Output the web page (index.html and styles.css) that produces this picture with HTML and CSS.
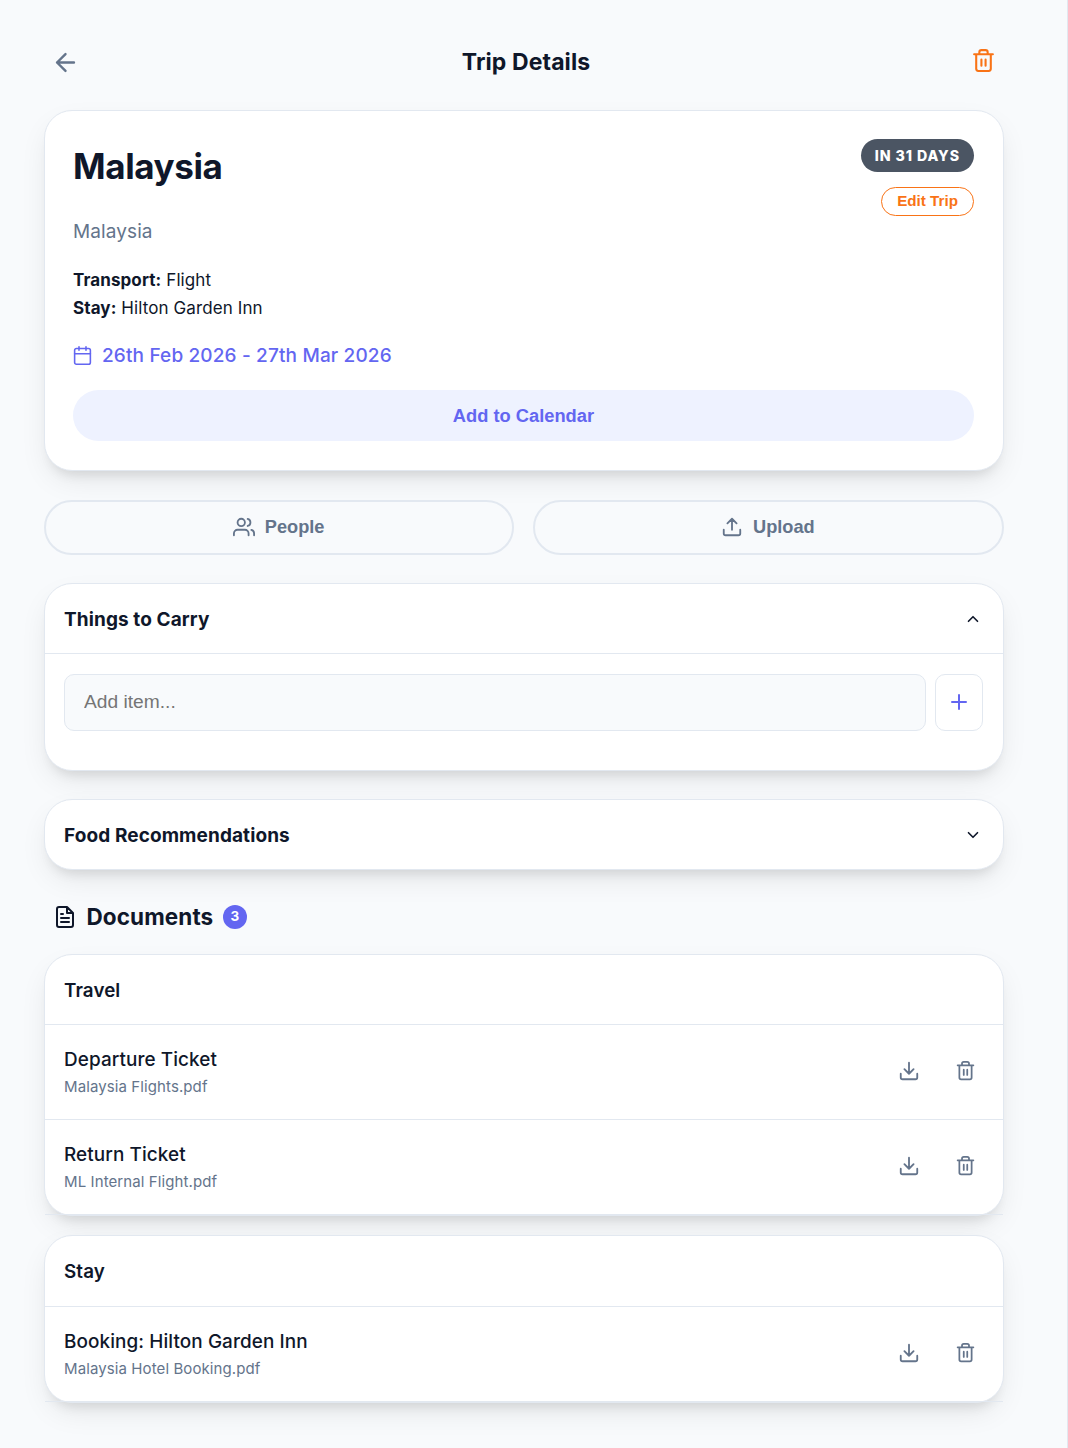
FILE: index.html
```html
<!DOCTYPE html>
<html lang="en">
<head>
    <meta charset="UTF-8">
    <title>Trip Details</title>
    <link rel="stylesheet" href="styles.css">
</head>
<body>
    <!-- shared icons -->
    <svg class="sprite">
        <symbol id="trash" viewBox="0 0 24 24">
            <path d="M3 6h18M19 6v14a2 2 0 0 1-2 2H7a2 2 0 0 1-2-2V6M8 6V4a2 2 0 0 1 2-2h4a2 2 0 0 1 2 2v2M10 11v6M14 11v6"/>
        </symbol>
        <symbol id="download" viewBox="0 0 24 24">
            <path d="M21 15v4a2 2 0 0 1-2 2H5a2 2 0 0 1-2-2v-4M7 10l5 5 5-5M12 15V3"/>
        </symbol>
    </svg>

    <div class="page">
        <header class="top">
            <svg class="icon back" viewBox="0 0 24 24"><path d="M19 12H5M12 19l-7-7 7-7"/></svg>
            <h1 class="top-title">Trip Details</h1>
            <svg class="icon delete"><use href="#trash"/></svg>
        </header>

        <section class="card trip">
            <div class="trip-head">
                <h2 class="trip-name">Malaysia</h2>
                <div class="trip-side">
                    <span class="badge">IN 31 DAYS</span>
                    <button class="edit">Edit Trip</button>
                </div>
            </div>
            <p class="place">Malaysia</p>
            <div class="info">
                <p><b>Transport:</b> Flight</p>
                <p><b>Stay:</b> Hilton Garden Inn</p>
            </div>
            <div class="dates">
                <svg class="icon cal" viewBox="0 0 24 24"><rect x="3" y="4" width="18" height="18" rx="2"/><path d="M16 2v4M8 2v4M3 10h18"/></svg>
                <span>26th Feb 2026 - 27th Mar 2026</span>
            </div>
            <button class="add-cal">Add to Calendar</button>
        </section>

        <div class="actions">
            <button class="action">
                <svg class="icon" viewBox="0 0 24 24"><path d="M17 21v-2a4 4 0 0 0-4-4H5a4 4 0 0 0-4 4v2"/><circle cx="9" cy="7" r="4"/><path d="M23 21v-2a4 4 0 0 0-3-3.87M16 3.13a4 4 0 0 1 0 7.75"/></svg>
                People
            </button>
            <button class="action">
                <svg class="icon" viewBox="0 0 24 24"><path d="M21 15v4a2 2 0 0 1-2 2H5a2 2 0 0 1-2-2v-4M17 8l-5-5-5 5M12 3v12"/></svg>
                Upload
            </button>
        </div>

        <section class="card carry">
            <div class="card-head line">
                <h3>Things to Carry</h3>
                <svg class="icon chevron" viewBox="0 0 24 24"><path d="M18 15l-6-6-6 6"/></svg>
            </div>
            <div class="add-row">
                <input class="item-input" type="text" placeholder="Add item...">
                <button class="plus"><svg class="icon" viewBox="0 0 24 24"><path d="M12 5v14M5 12h14"/></svg></button>
            </div>
        </section>

        <section class="card food">
            <div class="card-head">
                <h3>Food Recommendations</h3>
                <svg class="icon chevron" viewBox="0 0 24 24"><path d="M6 9l6 6 6-6"/></svg>
            </div>
        </section>

        <div class="docs-title">
            <svg class="icon file" viewBox="0 0 24 24"><path d="M14 2H6a2 2 0 0 0-2 2v16a2 2 0 0 0 2 2h12a2 2 0 0 0 2-2V8zM14 2v6h6M16 13H8M16 17H8M10 9H8"/></svg>
            <h2>Documents</h2>
            <span class="count">3</span>
        </div>

        <section class="card docs">
            <div class="card-head line"><h4>Travel</h4></div>
            <div class="doc">
                <div class="doc-text">
                    <p class="doc-name">Departure Ticket</p>
                    <p class="doc-file">Malaysia Flights.pdf</p>
                </div>
                <svg class="icon dl"><use href="#download"/></svg>
                <svg class="icon rm"><use href="#trash"/></svg>
            </div>
            <div class="doc">
                <div class="doc-text">
                    <p class="doc-name">Return Ticket</p>
                    <p class="doc-file">ML Internal Flight.pdf</p>
                </div>
                <svg class="icon dl"><use href="#download"/></svg>
                <svg class="icon rm"><use href="#trash"/></svg>
            </div>
        </section>

        <section class="card docs stay">
            <div class="card-head line"><h4>Stay</h4></div>
            <div class="doc">
                <div class="doc-text">
                    <p class="doc-name">Booking: Hilton Garden Inn</p>
                    <p class="doc-file">Malaysia Hotel Booking.pdf</p>
                </div>
                <svg class="icon dl"><use href="#download"/></svg>
                <svg class="icon rm"><use href="#trash"/></svg>
            </div>
        </section>
    </div>
</body>
</html>
```

FILE: styles.css
```css
* {
    box-sizing: border-box;
    margin: 0;
    padding: 0;
}

body {
    background: #f8fafc;
    color: #0f172a;
    font-family: Inter, "Liberation Sans", sans-serif;
    letter-spacing: 0.1px;
}

button, input {
    font-family: "Liberation Sans", Arial, sans-serif;
}

.sprite {
    display: none;
}

.icon {
    width: 22px;
    height: 22px;
    flex: none;
    fill: none;
    stroke: currentColor;
    stroke-width: 2;
    stroke-linecap: round;
    stroke-linejoin: round;
}

.page {
    height: 1448px;
    overflow: hidden;
    padding: 38px 63.5px 0 44px;
    border-right: 1px solid #e2e8f0;
}

/* header */
.top {
    display: flex;
    align-items: center;
    justify-content: space-between;
    height: 48px;
    padding: 0 7px 0 6.5px;
    margin-bottom: 24px;
}

.back {
    width: 29px;
    height: 29px;
    color: #64748b;
}

.top-title {
    font-size: 23px;
    font-weight: 700;
    padding-left: 1px;
}

.delete {
    width: 25px;
    height: 25px;
    color: #f97316;
    margin-bottom: 3px;
}

/* cards */
.card {
    background: #fff;
    border: 1px solid #e2e8f0;
    border-radius: 28px;
    box-shadow: 0 12px 30px -6px rgba(0, 0, 0, 0.1), 0 10px 12px -7px rgba(0, 0, 0, 0.1);
}

.trip {
    height: 361px;
    padding: 28px 28.6px 28px 28px;
}

.trip-head {
    display: flex;
    justify-content: space-between;
    height: 77px;
}

.trip-name {
    font-size: 35px;
    font-weight: 700;
    line-height: 55px;
    letter-spacing: -0.4px;
}

.trip-side {
    display: flex;
    flex-direction: column;
    align-items: flex-end;
    gap: 15px;
}

.badge {
    height: 33px;
    padding: 0 14px;
    border-radius: 17px;
    background: #4b5563;
    color: #fff;
    font-size: 14.2px;
    font-weight: 800;
    line-height: 33px;
    letter-spacing: 0.9px;
}

.edit {
    height: 29px;
    padding: 0 15px 2px;
    border: 1px solid #f97316;
    border-radius: 15px;
    background: none;
    color: #f97316;
    font-size: 15.2px;
    font-weight: 700;
}

.place {
    margin-top: 2px;
    color: #64748b;
    font-size: 19px;
    line-height: 28px;
}

.info {
    margin-top: 20px;
    font-size: 17px;
    line-height: 28px;
}

.dates {
    display: flex;
    align-items: center;
    gap: 10px;
    height: 28px;
    margin-top: 19px;
    color: #6366f1;
    font-size: 19px;
    font-weight: 500;
    letter-spacing: 0.15px;
}

.cal {
    width: 21px;
    height: 21px;
    margin-left: -1px;
    margin-right: -1px;
    stroke-width: 1.8;
}

.add-cal {
    display: block;
    width: 100%;
    height: 51px;
    padding-top: 1px;
    margin-top: 21px;
    border: 0;
    border-radius: 26px;
    background: #eef2ff;
    color: #6366f1;
    font-size: 18.3px;
    font-weight: 700;
}

/* people / upload */
.actions {
    display: grid;
    grid-template-columns: 1fr 1fr;
    gap: 19px;
    margin: 29px 0 28px;
}

.action {
    display: flex;
    align-items: center;
    justify-content: center;
    gap: 10px;
    height: 55px;
    padding-right: 1px;
    border: 2px solid #e2e8f0;
    border-radius: 28px;
    background: #f8fafc;
    color: #64748b;
    font-size: 18.2px;
    font-weight: 700;
}

.action .icon {
    margin-bottom: 2px;
}

.card-head {
    display: flex;
    align-items: center;
    justify-content: space-between;
    height: 69px;
    padding: 1px 20.6px 0 19px;
}

.card-head h3 {
    font-size: 19px;
    font-weight: 700;
}

.card-head h4 {
    font-size: 18.8px;
    font-weight: 600;
}

.line {
    height: 70px;
    border-bottom: 1px solid #e2e8f0;
}

.chevron {
    width: 18px;
    height: 18px;
    stroke-width: 2.2;
    margin-bottom: 1px;
}

.carry {
    height: 188px;
    margin-bottom: 28px;
}

.add-row {
    display: flex;
    gap: 9px;
    padding: 20px 19.6px 0 19px;
}

.item-input {
    flex: 1;
    height: 57px;
    padding: 0 19px 2px;
    border: 1px solid #e2e8f0;
    border-radius: 10px;
    background: #f8fafc;
    font-size: 19.2px;
}

.plus {
    display: flex;
    align-items: center;
    justify-content: center;
    width: 48px;
    height: 57px;
    padding-bottom: 1px;
    border: 1px solid #e2e8f0;
    border-radius: 10px;
    background: #fff;
    color: #6366f1;
}

.plus .icon {
    width: 24px;
    height: 24px;
}

.food {
    height: 71px;
}

/* documents */
.docs-title {
    display: flex;
    align-items: center;
    height: 30px;
    margin: 32px 0 22px;
    padding-left: 9px;
}

.docs-title h2 {
    font-size: 22.5px;
    font-weight: 700;
    line-height: 28px;
    margin: 0 9.5px 0 9.5px;
}

.file {
    width: 24px;
    height: 24px;
}

.count {
    width: 24px;
    height: 24px;
    border-radius: 50%;
    background: #6366f1;
    color: #fff;
    font-size: 13.5px;
    font-weight: 700;
    line-height: 23px;
    text-align: center;
}

.docs {
    margin-bottom: 19px;
}

.stay .line {
    height: 71px;
    padding-bottom: 1px;
}

.doc {
    display: flex;
    align-items: center;
    height: 95px;
    padding: 0 26.6px 0 19px;
    border-bottom: 1px solid #e2e8f0;
}

.doc-text {
    flex: 1;
}

.doc-name {
    font-size: 18.9px;
    font-weight: 500;
    line-height: 28px;
}

.doc-file {
    color: #64748b;
    font-size: 15px;
    line-height: 25px;
}

.dl {
    color: #64748b;
    margin-bottom: 3px;
}

.rm {
    width: 21px;
    height: 21px;
    margin: 0 0 3px 35px;
    color: #64748b;
}
```
